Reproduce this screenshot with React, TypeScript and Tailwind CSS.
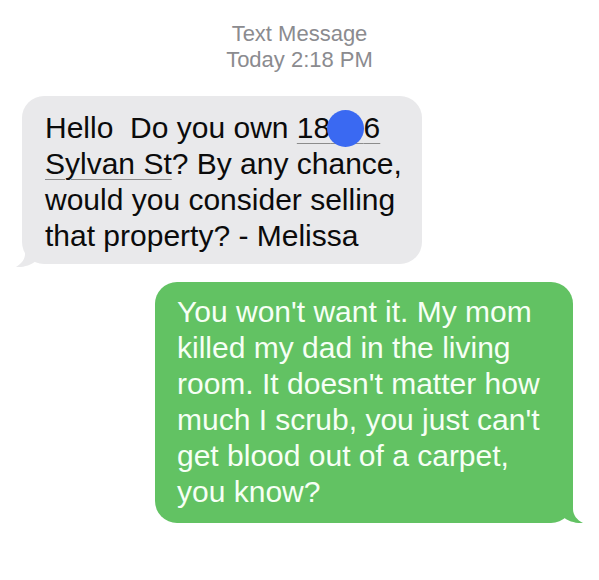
export default function App() {
  return (
    <div className="flex min-h-[580px] w-[599px] flex-col bg-white font-['Liberation_Sans',Arial,sans-serif]">
      <Header />

      <div className="mt-[23px] ml-[22px]">
        <ReceivedBubble />
      </div>

      <div className="mt-[18px] mr-[26px] self-end">
        <SentBubble />
      </div>
    </div>
  );
}

function Header() {
  return (
    <div className="pt-[21px] text-center text-[22px] leading-[26px] text-[#8b8b8f]">
      <p>Text Message</p>
      <p>Today 2:18 PM</p>
    </div>
  );
}

function ReceivedBubble() {
  return (
    <div className="relative w-[400px] rounded-[22px] bg-[#e9e9eb] pt-[14px] pr-[16px] pb-[10px] pl-[23px] text-[30px] leading-[36px] text-[#0b0b0b]">
      <p>
        Hello{"\u00a0"} Do you own{" "}
        <span className="underline decoration-[#8c8c8c] decoration-1 underline-offset-[5px]">
          18
          <span className="relative text-transparent">
            00
            <span className="absolute top-[-1px] left-[-3px] h-[37px] w-[37px] rounded-full bg-[#3a69f2]" />
          </span>
          6
        </span>
        <br />
        <span className="underline decoration-[#8c8c8c] decoration-1 underline-offset-[5px]">
          Sylvan St
        </span>
        ? By any chance,
        <br />
        would you consider selling
        <br />
        that property? - Melissa
      </p>

      <svg
        className="absolute bottom-[-4px] left-[-6px]"
        width="26"
        height="22"
        viewBox="0 0 26 22"
      >
        <path
          d="M9 0 L9 8 C9 13 6 17 0 21 C8 21.5 15 19 20 15 L26 15 L26 0 Z"
          fill="#e9e9eb"
        />
      </svg>
    </div>
  );
}

function SentBubble() {
  return (
    <div className="relative w-[418px] rounded-[22px] bg-[#62c263] pt-[12px] pr-[14px] pb-[13px] pl-[22px] text-[30px] leading-[36px] text-[#f6fff5]">
      <p className="relative z-10">
        You won't want it. My mom
        <br />
        killed my dad in the living
        <br />
        room. It doesn't matter how
        <br />
        much I scrub, you just can't
        <br />
        get blood out of a carpet,
        <br />
        you know?
      </p>

      <svg
        className="absolute right-[-10px] bottom-[-1px]"
        width="30"
        height="24"
        viewBox="0 0 30 24"
      >
        <path
          d="M20 0 L20 9 C20 15 24 20 30 23 C22 23.5 15 21 10 17 L0 17 L0 0 Z"
          fill="#62c263"
        />
      </svg>
    </div>
  );
}
